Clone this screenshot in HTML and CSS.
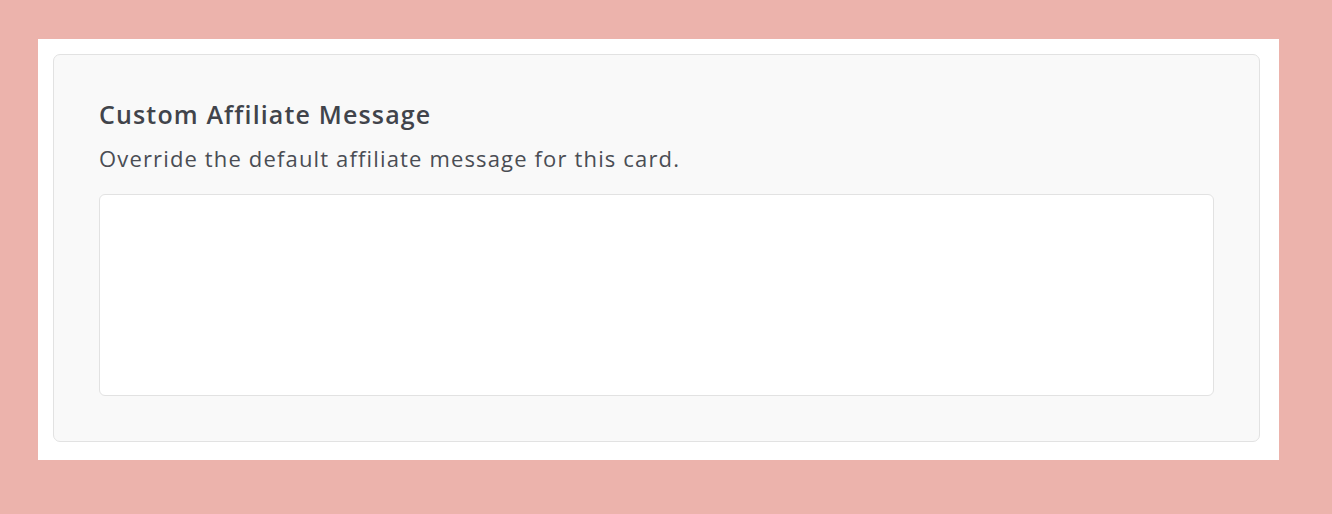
FILE: index.html
```html
<!DOCTYPE html>
<html>
<head>
<meta charset="utf-8">
<link rel="stylesheet" href="styles.css">
</head>
<body>
<div class="sheet">
  <section class="card">
    <h2 class="card-title">Custom Affiliate Message</h2>
    <p class="card-desc">Override the default affiliate message for this card.</p>
    <textarea class="card-input"></textarea>
  </section>
</div>
</body>
</html>
```
FILE: styles.css
```css
html, body {
  margin: 0;
  padding: 0;
}
body {
  background: #ecb3ac;
  width: 1332px;
  height: 514px;
  font-family: "Open Sans", "Lato", sans-serif;
}
.sheet {
  margin: 39px 0 0 38px;
  width: 1241px;
  height: 421px;
  box-sizing: border-box;
  background: #ffffff;
  padding: 15px 19px 0 15px;
}
.card {
  box-sizing: border-box;
  height: 388px;
  background: #f9f9f9;
  border: 1px solid #e2e2e2;
  border-radius: 7px;
  padding: 43px 45px 0 45px;
  display: flex;
  flex-direction: column;
}
.card-title {
  margin: 0;
  font-size: 25px;
  font-weight: 600;
  line-height: 32px;
  letter-spacing: 1.15px;
  color: #41444b;
}
.card-desc {
  margin: 14px 0 0 0;
  font-size: 22px;
  font-weight: 400;
  line-height: 28px;
  letter-spacing: 1.15px;
  color: #4a4d54;
}
.card-input {
  margin: 22px 0 0 0;
  display: block;
  width: 100%;
  height: 202px;
  box-sizing: border-box;
  background: #ffffff;
  border: 1px solid #e2e2e2;
  border-radius: 6px;
  resize: none;
  outline: none;
}
```
